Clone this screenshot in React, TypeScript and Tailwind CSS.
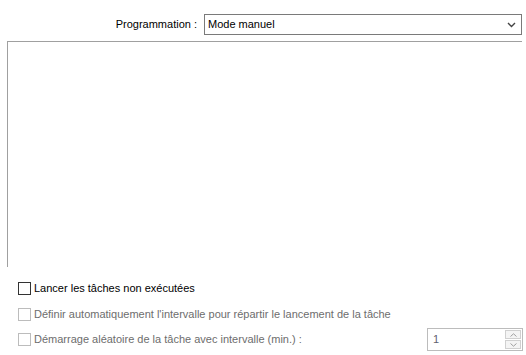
import React from "react";

// Options de programmation d'une tâche.
const font = { fontFamily: "Tahoma, 'Liberation Sans', Arial, sans-serif" };

const Check: React.FC<{ label: string; disabled?: boolean }> = ({ label, disabled }) => (
  <label className="flex h-[13px] items-center gap-[3px] whitespace-nowrap">
    <span
      className={`block h-[13px] w-[13px] shrink-0 border bg-white ${
        disabled ? "border-[#bcbcbc]" : "border-[#333333]"
      }`}
    />
    <span className={disabled ? "text-[#6d6d6d]" : "text-black"}>{label}</span>
  </label>
);

export default function App() {
  return (
    <div className="h-[355px] w-[526px] overflow-hidden bg-white text-[11px] leading-[13px]" style={font}>
      <div className="flex items-center pt-[14px] pr-[4px]">
        <span className="w-[197px] whitespace-nowrap text-right text-black">Programmation :</span>
        <div className="ml-[7px] flex h-[21px] flex-1 items-center justify-between border border-[#7a7a7a] bg-white pl-[3px] pr-[5px]">
          <span>Mode manuel</span>
          <svg width="9" height="6" viewBox="0 0 9 6">
            <path d="M1 1 L4.5 4.5 L8 1" fill="none" stroke="#444" strokeWidth="1.4" />
          </svg>
        </div>
      </div>

      <div className="ml-[7px] mr-[4px] mt-[6px] h-[226px] border-l border-t border-[#a0a0a0]" />

      <div className="pl-[18px]">
        <div className="mt-[15px]">
          <Check label="Lancer les tâches non exécutées" />
        </div>
        <div className="mt-[13px]">
          <Check disabled label="Définir automatiquement l'intervalle pour répartir le lancement de la tâche" />
        </div>
        <div className="mt-[7px] flex h-[23px] items-center justify-between pr-[3px]">
          <Check disabled label="Démarrage aléatoire de la tâche avec intervalle (min.) :" />
          <div className="flex h-[23px] w-[96px] border border-[#bcbcbc] bg-white">
            <span className="flex-1 pl-[5px] pt-[4px] text-[#5f5f6f]">1</span>
            <div className="flex w-[18px] flex-col gap-[1px] p-[1px]">
              <div className="flex flex-1 items-center justify-center border border-[#d0d0d0] bg-[#f4f4f4]">
                <svg width="7" height="4" viewBox="0 0 7 4">
                  <path d="M0.5 3.5 L3.5 0.8 L6.5 3.5" fill="none" stroke="#a0a0a0" strokeWidth="1" />
                </svg>
              </div>
              <div className="flex flex-1 items-center justify-center border border-[#d0d0d0] bg-[#f4f4f4]">
                <svg width="7" height="4" viewBox="0 0 7 4">
                  <path d="M0.5 0.5 L3.5 3.2 L6.5 0.5" fill="none" stroke="#a0a0a0" strokeWidth="1" />
                </svg>
              </div>
            </div>
          </div>
        </div>
      </div>
    </div>
  );
}
